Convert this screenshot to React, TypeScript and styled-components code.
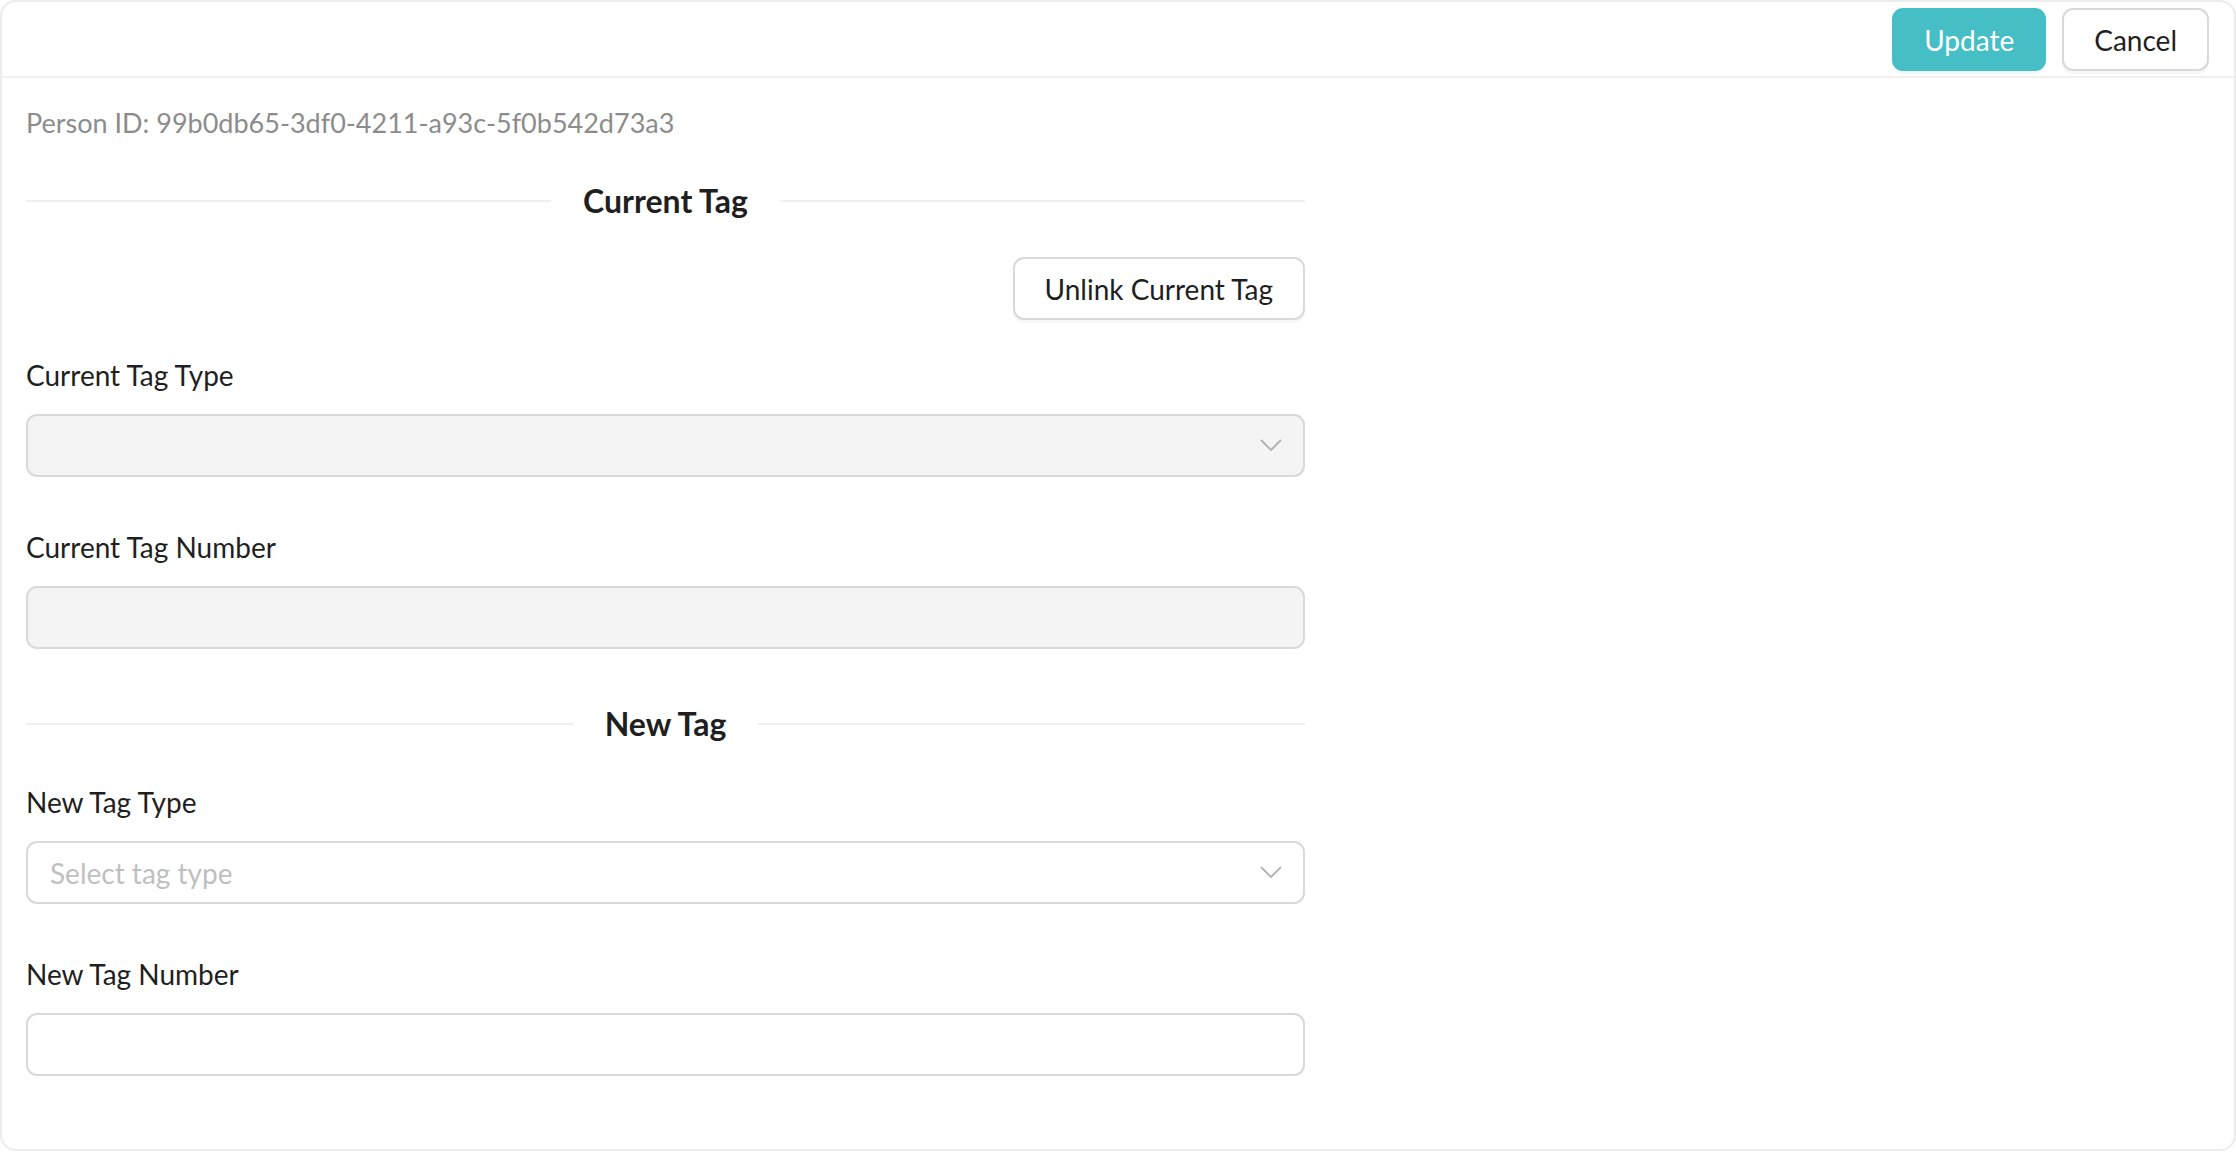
import React from "react";
import styled, { createGlobalStyle } from "styled-components";

const GlobalStyle = createGlobalStyle`
  * {
    box-sizing: border-box;
  }

  body {
    margin: 0;
    background: #fff;
    font-family: Lato, "Open Sans", sans-serif;
    color: #1f1f1f;
  }
`;

const ChevronDown = () => (
  <svg width="22" height="13" viewBox="0 0 22 13" fill="none">
    <polyline
      points="1.5,1.5 11,11 20.5,1.5"
      stroke="#b3b3b3"
      strokeWidth="1.8"
      strokeLinecap="round"
      strokeLinejoin="round"
    />
  </svg>
);

const TagForm = () => {
  return (
    <Card>
      <Header>
        <Button $primary>Update</Button>
        <Button>Cancel</Button>
      </Header>

      <Body>
        <PersonId>Person ID: 99b0db65-3df0-4211-a93c-5f0b542d73a3</PersonId>

        <Form>
          <Divider>
            <DividerTitle>Current Tag</DividerTitle>
          </Divider>

          <ActionRow>
            <Button>Unlink Current Tag</Button>
          </ActionRow>

          <Field>
            <Label>Current Tag Type</Label>
            <SelectBox $disabled>
              <Placeholder />
              <ChevronDown />
            </SelectBox>
          </Field>

          <Field>
            <Label>Current Tag Number</Label>
            <TextInput disabled />
          </Field>

          <Divider $top={53}>
            <DividerTitle>New Tag</DividerTitle>
          </Divider>

          <Field>
            <Label>New Tag Type</Label>
            <SelectBox>
              <Placeholder>Select tag type</Placeholder>
              <ChevronDown />
            </SelectBox>
          </Field>

          <Field>
            <Label>New Tag Number</Label>
            <TextInput />
          </Field>
        </Form>
      </Body>
    </Card>
  );
};

export default function App() {
  return (
    <>
      <GlobalStyle />
      <TagForm />
    </>
  );
}

const Card = styled.div`
  width: 100%;
  height: 1151px;
  border: 2px solid #ececec;
  border-radius: 16px;
  background: #fff;
  display: flex;
  flex-direction: column;
`;

const Header = styled.div`
  height: 76px;
  border-bottom: 2px solid #f0f0f0;
  display: flex;
  justify-content: flex-end;
  align-items: flex-start;
  gap: 16px;
  padding: 6px 25px 0 0;
`;

const Button = styled.button<{ $primary?: boolean }>`
  height: 63px;
  padding: 0 30px;
  border-radius: 11px;
  font-family: Lato, "Open Sans", sans-serif;
  font-size: 28px;
  line-height: 1;
  cursor: pointer;
  color: ${(p) => (p.$primary ? "#fff" : "#1f1f1f")};
  background: ${(p) => (p.$primary ? "#45bec6" : "#fff")};
  border: 2px solid ${(p) => (p.$primary ? "#45bec6" : "#d9d9d9")};
  box-shadow: ${(p) =>
    p.$primary ? "0 3px 0 rgba(5, 145, 255, 0.06)" : "0 3px 0 rgba(0, 0, 0, 0.03)"};
`;

const Body = styled.div`
  padding: 23px 0 0 24px;
`;

const PersonId = styled.div`
  font-size: 27px;
  line-height: 44px;
  color: #8c8c8c;
`;

const Form = styled.div`
  width: 1279px;
`;

const Divider = styled.div<{ $top?: number }>`
  display: flex;
  align-items: center;
  margin: ${(p) => p.$top ?? 34}px 0 34px;

  &::before,
  &::after {
    content: "";
    flex: 1;
    border-top: 2px solid #f0f0f0;
  }
`;

const DividerTitle = styled.span`
  padding: 0 32px;
  font-size: 32px;
  font-weight: 700;
  line-height: 44px;
  color: #1f1f1f;
`;

const ActionRow = styled.div`
  display: flex;
  justify-content: flex-end;
  margin-bottom: 33px;
`;

const Field = styled.div`
  margin-bottom: 48px;
`;

const Label = styled.div`
  font-size: 28px;
  line-height: 44px;
  margin-bottom: 17px;
  color: #1f1f1f;
`;

const SelectBox = styled.div<{ $disabled?: boolean }>`
  height: 63px;
  display: flex;
  align-items: center;
  justify-content: space-between;
  padding: 0 21px 0 22px;
  border: 2px solid #d9d9d9;
  border-radius: 11px;
  background: ${(p) => (p.$disabled ? "#f4f4f4" : "#fff")};
`;

const Placeholder = styled.span`
  font-size: 28px;
  color: #bfbfbf;
`;

const TextInput = styled.input`
  display: block;
  width: 100%;
  height: 63px;
  padding: 0 22px;
  border: 2px solid #d9d9d9;
  border-radius: 11px;
  font-family: Lato, "Open Sans", sans-serif;
  font-size: 28px;
  background: #fff;
  outline: none;

  &:disabled {
    background: #f4f4f4;
  }
`;
